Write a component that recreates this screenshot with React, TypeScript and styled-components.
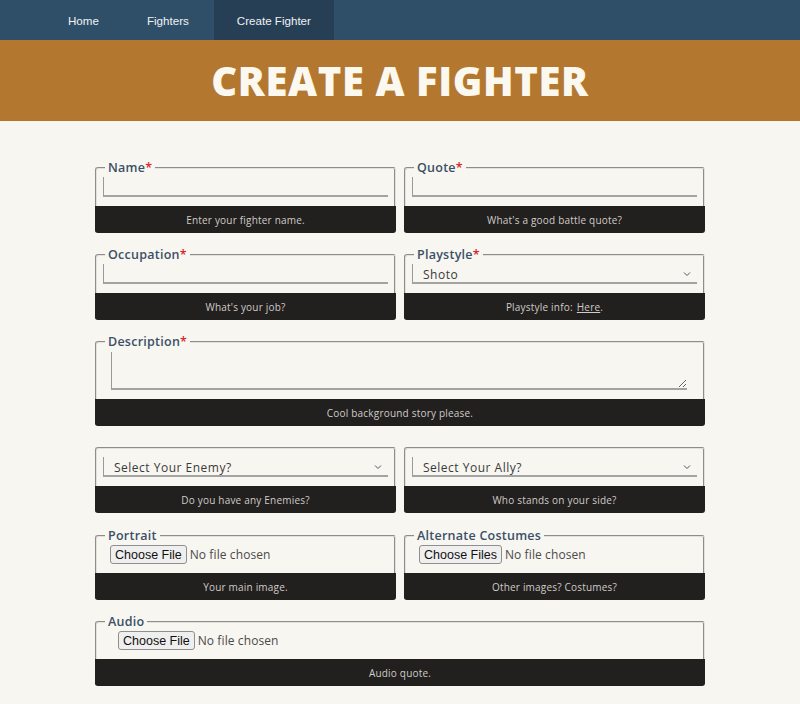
import React from "react";
import styled, { createGlobalStyle } from "styled-components";

const Global = createGlobalStyle`
  html, body { margin: 0; padding: 0; background: #f8f6f0; }
  body { font-family: "Open Sans", "Liberation Sans", sans-serif; }
  * { box-sizing: border-box; }
`;

const Nav = styled.nav`
  height: 40px;
  background: #2f4f69;
  display: flex;
  gap: 2px;
  padding-left: 45px;
`;

const NavItem = styled.a<{ $active?: boolean }>`
  display: flex;
  align-items: center;
  height: 40px;
  padding: 0 23px;
  font-family: "Liberation Sans", Arial, sans-serif;
  font-size: 11.6px;
  color: #eef2f5;
  text-decoration: none;
  background: ${(p) => (p.$active ? "#273f55" : "transparent")};
`;

const Banner = styled.header`
  height: 81px;
  background: #b3772f;
  display: flex;
  align-items: center;
  justify-content: center;
`;

const Title = styled.h1`
  margin: 0;
  font-family: "Open Sans", "Liberation Sans", sans-serif;
  font-weight: 800;
  font-size: 40px;
  letter-spacing: 0.6px;
  color: #fbf8f0;
  line-height: 1;
`;

const Form = styled.form`
  width: 610px;
  margin: 39px auto 0;
  display: grid;
  grid-template-columns: 1fr 1fr;
  column-gap: 8px;
  row-gap: 14px;
  padding-bottom: 20px;
`;

const Field = styled.fieldset<{ $wide?: boolean; $bare?: boolean }>`
  margin: ${(p) => (p.$bare ? "7px 0 1px" : "0")};
  padding: 0;
  min-width: 0;
  border: 2px groove rgb(226, 225, 222);
  border-radius: 3px;
  grid-column: ${(p) => (p.$wide ? "1 / span 2" : "auto")};
  display: flex;
  flex-direction: column;
`;

const Legend = styled.legend`
  margin-left: 8px;
  padding: 0 3px;
  font-size: 12.5px;
  font-weight: 600;
  letter-spacing: 0.25px;
  line-height: 16px;
  color: #3a5068;
`;

const Req = styled.span`
  color: #d8262b;
`;

const Body = styled.div<{ $top?: number; $left?: number; $right?: number }>`
  padding: ${(p) => p.$top ?? 1}px ${(p) => p.$right ?? 6}px 9px ${(p) => p.$left ?? 6}px;
  display: flex;
  align-items: flex-start;
`;

const TextInput = styled.input`
  flex: 1;
  height: 20px;
  border: none;
  border-left: 1px solid #9a9a9a;
  border-bottom: 2px solid #a3a3a3;
  background: transparent;
  font-family: "Open Sans", sans-serif;
  font-size: 12px;
  outline: none;
`;

const TextArea = styled.textarea`
  flex: 1;
  height: 38px;
  border: none;
  border-left: 1px solid #9a9a9a;
  border-bottom: 2px solid #a3a3a3;
  background: transparent;
  resize: vertical;
  outline: none;
`;

const SelectWrap = styled.div`
  flex: 1;
  position: relative;
  display: flex;
`;

const Select = styled.select`
  flex: 1;
  height: 20px;
  appearance: none;
  border: none;
  border-left: 1px solid #9a9a9a;
  border-bottom: 2px solid #a3a3a3;
  border-radius: 0;
  background: transparent;
  padding: 2px 0 0 10px;
  font-family: "Open Sans", sans-serif;
  font-size: 12px;
  letter-spacing: 0.5px;
  color: #3a3a3a;
  outline: none;
`;

const Chevron = styled.svg`
  position: absolute;
  right: 6px;
  top: 7px;
  pointer-events: none;
`;

const FileInput = styled.input`
  height: 19px;
  font-family: "Open Sans", sans-serif;
  font-size: 12px;
  letter-spacing: 0.1px;
  color: #4a4a4a;
  &::file-selector-button {
    font-family: "Liberation Sans", Arial, sans-serif;
    font-size: 12.5px;
    color: #111;
    height: 19px;
    padding: 0 4px;
    margin-right: 3px;
    border: 1px solid #8f8f8f;
    border-radius: 3px;
    background: #efefef;
  }
`;

const Footer = styled.div`
  margin: 0 -2px -2px;
  height: 27px;
  background: #221f1f;
  border-radius: 0 0 3px 3px;
  display: flex;
  align-items: center;
  justify-content: center;
  font-size: 10px;
  letter-spacing: 0.2px;
  color: #cfccc6;
`;

const Link = styled.a`
  color: #cfccc6;
  text-decoration: underline;
  margin-left: 4px;
`;

const ChevronIcon = () => (
  <Chevron width="8" height="6" viewBox="0 0 8 6">
    <path d="M1 1.5 L4 4.5 L7 1.5" fill="none" stroke="#555" strokeWidth="1" />
  </Chevron>
);

export default function App() {
  return (
    <>
      <Global />
      <Nav>
        <NavItem href="#">Home</NavItem>
        <NavItem href="#">Fighters</NavItem>
        <NavItem href="#" $active>
          Create Fighter
        </NavItem>
      </Nav>
      <Banner>
        <Title>CREATE A FIGHTER</Title>
      </Banner>
      <Form>
        <Field>
          <Legend>
            Name<Req>*</Req>
          </Legend>
          <Body>
            <TextInput type="text" />
          </Body>
          <Footer>Enter your fighter name.</Footer>
        </Field>
        <Field>
          <Legend>
            Quote<Req>*</Req>
          </Legend>
          <Body>
            <TextInput type="text" />
          </Body>
          <Footer>What's a good battle quote?</Footer>
        </Field>
        <Field>
          <Legend>
            Occupation<Req>*</Req>
          </Legend>
          <Body>
            <TextInput type="text" />
          </Body>
          <Footer>What's your job?</Footer>
        </Field>
        <Field>
          <Legend>
            Playstyle<Req>*</Req>
          </Legend>
          <Body>
            <SelectWrap>
              <Select defaultValue="Shoto">
                <option>Shoto</option>
                <option>Grappler</option>
                <option>Zoner</option>
                <option>Rushdown</option>
              </Select>
              <ChevronIcon />
            </SelectWrap>
          </Body>
          <Footer>
            Playstyle info: <Link href="#">Here</Link>.
          </Footer>
        </Field>
        <Field $wide>
          <Legend>
            Description<Req>*</Req>
          </Legend>
          <Body $top={2} $left={14} $right={16}>
            <TextArea />
          </Body>
          <Footer>Cool background story please.</Footer>
        </Field>
        <Field $bare>
          <Body $top={8}>
            <SelectWrap>
              <Select defaultValue="">
                <option value="">Select Your Enemy?</option>
              </Select>
              <ChevronIcon />
            </SelectWrap>
          </Body>
          <Footer>Do you have any Enemies?</Footer>
        </Field>
        <Field $bare>
          <Body $top={8}>
            <SelectWrap>
              <Select defaultValue="">
                <option value="">Select Your Ally?</option>
              </Select>
              <ChevronIcon />
            </SelectWrap>
          </Body>
          <Footer>Who stands on your side?</Footer>
        </Field>
        <Field>
          <Legend>Portrait</Legend>
          <Body $top={1} $left={13}>
            <FileInput type="file" />
          </Body>
          <Footer>Your main image.</Footer>
        </Field>
        <Field>
          <Legend>Alternate Costumes</Legend>
          <Body $top={1} $left={13}>
            <FileInput type="file" multiple />
          </Body>
          <Footer>Other images? Costumes?</Footer>
        </Field>
        <Field $wide>
          <Legend>Audio</Legend>
          <Body $top={1} $left={21}>
            <FileInput type="file" />
          </Body>
          <Footer>Audio quote.</Footer>
        </Field>
      </Form>
    </>
  );
}
